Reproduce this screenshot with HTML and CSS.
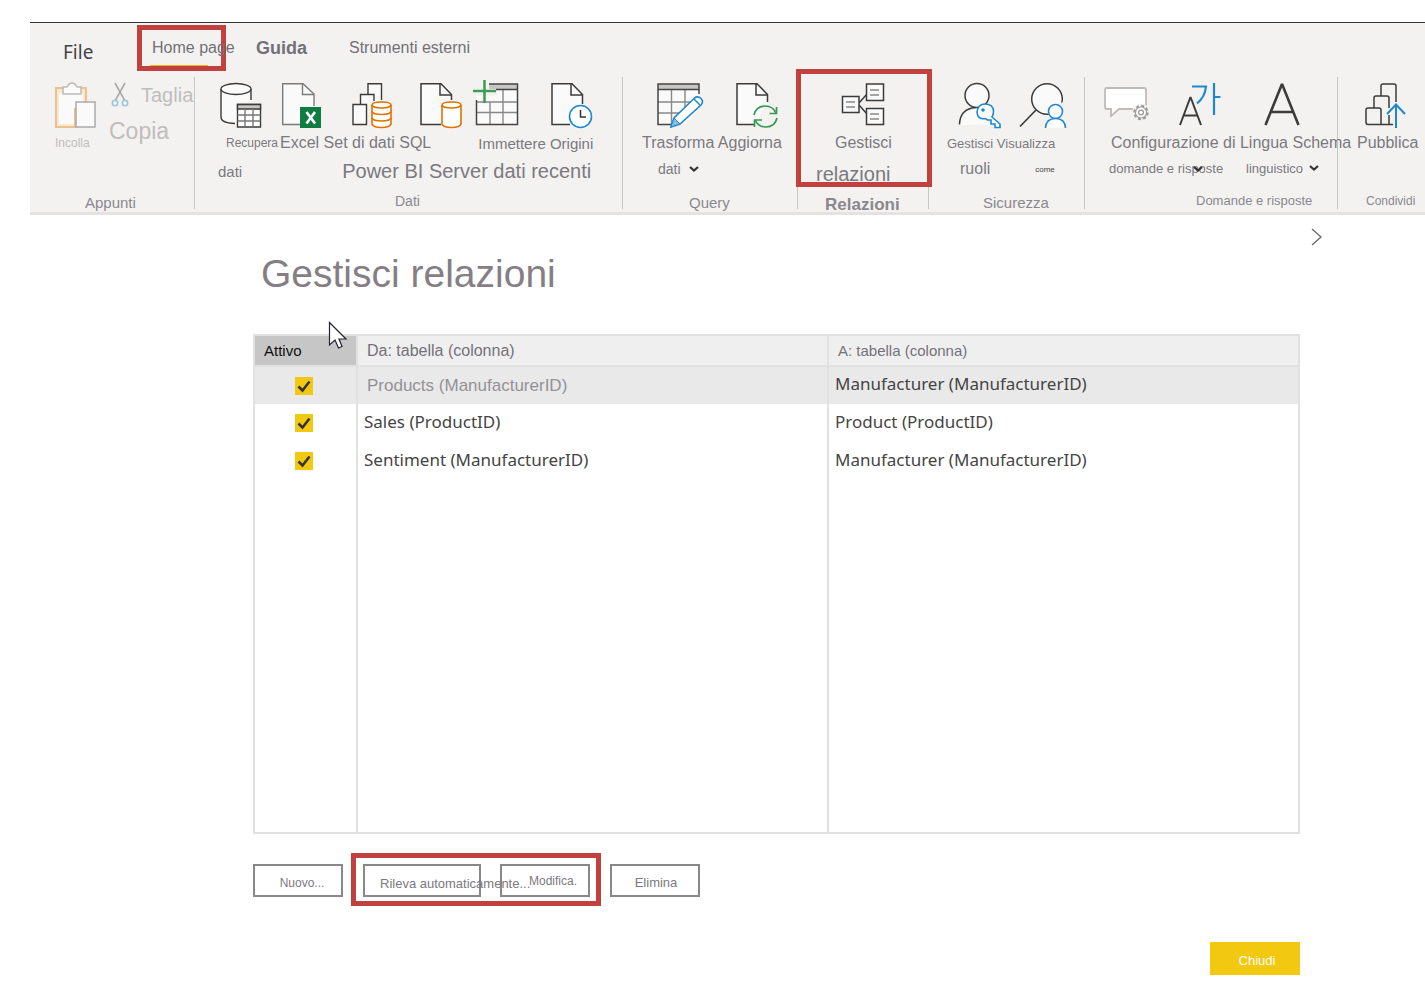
FILE: index.html
```html
<!DOCTYPE html>
<html lang="it">
<head>
<meta charset="utf-8">
<title>Gestisci relazioni</title>
<link rel="stylesheet" href="styles.css">
</head>
<body>
<header class="ribbon">
  <nav class="tabs">
    <a class="tab tab-file" href="#">File</a>
    <a class="tab tab-home" href="#">Home page</a>
    <a class="tab tab-guide" href="#">Guida</a>
    <a class="tab tab-tools" href="#">Strumenti esterni</a>
  </nav>
  <div class="groups">
    <section class="group clipboard">
      <div class="clip-cols">
        <button class="cmd paste" type="button">
          <svg width="44" height="48" fill="none"><path d="M9 6H2V45H21V27H32V6H26" fill="#f8e9cc" stroke="#efc08f" stroke-width="2"/><path d="M5 11H29V26H20V42H5Z" fill="#fafafa"/><path d="M9 5H13Q15 1 18 1T23 5H27V12H9Z" fill="#fafafa" stroke="#bbb" stroke-width="1.5"/><path d="M22 20H41V45H22Z" fill="#fafafa" stroke="#aaa" stroke-width="1.5"/></svg>
          <span class="t12">Incolla</span>
        </button>
        <div class="clip-side">
          <button class="cmd cut" type="button">
            <svg width="22" height="26" fill="none"><path d="M6 1L16 19M16 1L6 19" stroke="#aaa" stroke-width="1.6"/><circle cx="6" cy="21" r="2.7" stroke="#9cc6e2" stroke-width="1.6"/><circle cx="16" cy="21" r="2.7" stroke="#9cc6e2" stroke-width="1.6"/></svg>
            <span class="t20">Taglia</span>
          </button>
          <button class="cmd copy t23" type="button">Copia</button>
        </div>
      </div>
      <h2 class="caption t15">Appunti</h2>
    </section>

    <section class="group data">
      <div class="icons">
        <button class="cmd" type="button" aria-label="Recupera dati"><svg width="54" height="48" fill="none" stroke="#3b3b3b" stroke-width="1.4"><path d="M2 7V36Q2 41 16 42H18V20H32V7" fill="#fafafa" stroke="none"/><path d="M2 7V35Q2 41 16 41.500M32 7V18"/><ellipse cx="17" cy="7" rx="15" ry="5.500" fill="#fafafa"/><path d="M18.500 22.500H41.500V45H18.500Z" fill="#fff"/><path d="M18.500 22.500H41.500V27H18.500Z" fill="#c8c6c4"/><path d="M18.500 33H41.500M18.500 39H41.500M26 27V45M34 27V45" stroke="#777"/></svg></button>
        <button class="cmd" type="button" aria-label="Excel"><svg width="62" height="48" fill="none"><path d="M20 42.500H1.700V1.700H22L33 12V24" fill="#fafafa" stroke="#7a7a7a" stroke-width="1.4"/><path d="M21.500 2V12.500H33" stroke="#7a7a7a" stroke-width="1.4"/><path d="M19 25H40V46H19Z" fill="#107c41"/><path d="M25.500 30L34 41.500M34 30L25.500 41.500" stroke="#fff" stroke-width="2.600"/></svg></button>
        <button class="cmd" type="button" aria-label="Set di dati Power BI"><svg width="60" height="48" fill="none" stroke="#3b3b3b" stroke-width="1.400"><path d="M17 12V1.700H30.500V18L23 22V12Z" fill="#fafafa" stroke="none"/><path d="M17 12V1.700H30.500V18"/><path d="M9.500 22V12.500H23V20L16 24Z" fill="#fafafa" stroke="none"/><path d="M9.500 22V12.500H23V19"/><path d="M2 22.500H15.500V42.500H2Z" fill="#fafafa"/><path d="M21 23Q21 20 30.500 20T40 23V42Q39 45.500 30.500 45.500T21 42Z" fill="#fff" stroke="#e07000" stroke-width="1.600"/><path d="M21 23Q22 26 30.500 26T40 23M21 29.500Q22 32.500 30.500 32.500T40 29.500M21 36Q22 39 30.500 39T40 36" stroke="#e07000" stroke-width="1.600"/></svg></button>
        <button class="cmd" type="button" aria-label="SQL Server"><svg width="45" height="48" fill="none"><path d="M22 42.500H2V1.700H22L32.500 12.500V18" fill="#fafafa" stroke="#3b3b3b" stroke-width="1.500"/><path d="M21 2V13H32" stroke="#3b3b3b" stroke-width="1.500"/><path d="M23 23Q23 20 32.500 20T42 23V42Q41 45.500 32.500 45.500T23 42Z" fill="#fff" stroke="#e07000" stroke-width="1.600"/><path d="M23 23Q24 26 32.500 26T42 23" stroke="#e07000" stroke-width="1.600"/></svg></button>
        <button class="cmd" type="button" aria-label="Immettere dati"><svg width="70" height="48" fill="none"><path d="M4.500 14H25V2H45.500V42.500H4.500Z" fill="#fafafa"/><path d="M17 2H45.500V7H17Z" fill="#c8c6c4"/><path d="M5 30.500H45M5 20H45M18 20V42M31 8V42" stroke="#888" stroke-width="1.400"/><path d="M17 2H45.500V42.500H4.500V18M24 7.500H45" stroke="#444" stroke-width="1.500"/><path d="M12.500 -2V21M1 9H24" stroke="#3c9b55" stroke-width="2.500"/></svg></button>
        <button class="cmd" type="button" aria-label="Origini recenti"><svg width="44" height="48" fill="none"><path d="M20 42.500H2V1.700H22L32.500 12.500V22" fill="#fafafa" stroke="#3b3b3b" stroke-width="1.500"/><path d="M21 2V13H32" stroke="#3b3b3b" stroke-width="1.500"/><circle cx="30.500" cy="34.500" r="11" fill="#fff" stroke="#1e88cf" stroke-width="1.600"/><path d="M30.500 28V35H36" stroke="#333" stroke-width="1.500"/></svg></button>
      </div>
      <div class="line line1"><span class="t12">Recupera</span><span class="t16">Excel Set di dati SQL</span><span class="t15 enter">Immettere Origini</span></div>
      <div class="line line2"><span class="t15">dati</span><span class="t20">Power BI Server dati recenti</span></div>
      <h2 class="caption t14">Dati</h2>
    </section>

    <section class="group query">
      <div class="icons">
        <button class="cmd" type="button" aria-label="Trasforma dati"><svg width="71" height="48" fill="none"><path d="M2 2H43V42.500H2Z" fill="#fafafa"/><path d="M2 2H43V7.500H2Z" fill="#c8c6c4"/><path d="M2 20H42M2 31H30M15.500 8V42M29 8V30" stroke="#888" stroke-width="1.400"/><path d="M43 12V2H2V42.500H20M2 7.500H43" stroke="#444" stroke-width="1.500"/><path d="M25 46L47 24V40L40 46Z" fill="#f3f2f1"/><path d="M15 45L18 36L38.500 16Q42 13.500 45 16.500T45 23L24 42Z" fill="#fff" stroke="#1e88cf" stroke-width="1.600"/><path d="M15 45L18 36L24 42Z" fill="#83bde8" stroke="#1e88cf"/><path d="M38 17L44 23" stroke="#1e88cf" stroke-width="1.500"/></svg></button>
        <button class="cmd" type="button" aria-label="Aggiorna"><svg width="46" height="48" fill="none"><path d="M20 42.500H2V1.700H22L32.500 12.500V20" fill="#fafafa" stroke="#3b3b3b" stroke-width="1.500"/><path d="M21 2V13H32" stroke="#3b3b3b" stroke-width="1.500"/><path d="M19 33Q21 24 30 24Q38 24 41 31M42 36Q40 45 31 45Q23 45 20 38" stroke="#379650" stroke-width="1.700"/><path d="M41.500 25V31.500H34.500M19.500 45V38H27" stroke="#379650" stroke-width="1.700"/></svg></button>
      </div>
      <div class="line t16">Trasforma Aggiorna</div>
      <div class="line t14 line2">dati <svg class="chev" width="10" height="6" fill="none" stroke="#333" stroke-width="2.200"><path d="M1 1L5 4.500L9 1"/></svg></div>
      <h2 class="caption t15">Query</h2>
    </section>

    <section class="group relations">
      <div class="icons">
        <button class="cmd" type="button" aria-label="Gestisci relazioni"><svg width="44" height="48" fill="none" stroke="#3b3b3b" stroke-width="1.500"><path d="M18 21L26 12M18 23L26 32"/><path d="M1.500 14.500H18V30.500H1.500ZM25.500 2H42.500V18.500H25.500ZM25.500 26.500H42.500V42.500H25.500Z" fill="#fafafa"/><path d="M5 20H14M5 25H14M29 8H38M29 13H38M29 32H38M29 37H38" stroke="#888"/></svg></button>
      </div>
      <div class="line t16">Gestisci</div>
      <div class="line line2 t20">relazioni</div>
      <h2 class="caption">Relazioni</h2>
    </section>

    <section class="group security">
      <div class="icons">
        <button class="cmd" type="button" aria-label="Gestisci ruoli"><svg width="61" height="48" fill="none"><path d="M1 43Q1 26 18 26L32 43Z" fill="#fafafa"/><path d="M.500 42.500Q1 26.500 17 25.500" stroke="#3b3b3b" stroke-width="1.500"/><circle cx="18" cy="13.500" r="12" fill="#fafafa" stroke="#3b3b3b" stroke-width="1.500"/><path d="M33 35L41 42V45.500H36V42H32V38H28.500L26.500 36.500Q18.500 38 18 30Q19 22 26 22Q34 22 34.500 29Q34.500 33 33 35Z" fill="#fff" stroke="#1e88cf" stroke-width="1.600"/><circle cx="24" cy="28" r="1.800" fill="#1e88cf"/></svg></button>
        <button class="cmd" type="button" aria-label="Visualizza come"><svg width="48" height="48" fill="none"><circle cx="27" cy="17" r="15.300" fill="#fafafa" stroke="#3b3b3b" stroke-width="1.500"/><path d="M16 28L0 44.500" stroke="#3b3b3b" stroke-width="1.700"/><path d="M25 46V40Q26 35 30 35Q27 30 28 24L44 20V46Z" fill="#f3f2f1"/><circle cx="35.500" cy="29.500" r="7" fill="#fff" stroke="#1e88cf" stroke-width="1.600"/><path d="M25.500 46Q26 36.500 35.500 36.500T45.500 46" fill="#fff" stroke="#1e88cf" stroke-width="1.600"/></svg></button>
      </div>
      <div class="line t13">Gestisci Visualizza</div>
      <div class="line line2"><span class="t16">ruoli</span><span class="t8">come</span></div>
      <h2 class="caption t15">Sicurezza</h2>
    </section>

    <section class="group qna">
      <div class="icons">
        <button class="cmd" type="button" aria-label="Configurazione di domande e risposte"><svg width="76" height="48" fill="none"><path d="M3 6H40Q42 6 42 8V27H15L7 34V27H3Q1 27 1 25V8Q1 6 3 6Z" fill="#fff" stroke="#bebbb8" stroke-width="1.800"/><circle cx="37" cy="30.500" r="9" fill="#f3f2f1"/><circle cx="37" cy="30.500" r="6.700" stroke="#999" stroke-width="2" stroke-dasharray="3 2.260"/><circle cx="37" cy="30.500" r="5.500" fill="#fff" stroke="#999" stroke-width="1.200"/><circle cx="37" cy="30.500" r="2.400" stroke="#999" stroke-width="1.300"/></svg></button>
        <button class="cmd" type="button" aria-label="Lingua"><svg width="84" height="48" fill="none"><path d="M0 43L10.500 15L21 43M4 33.500H17" stroke="#3b3b3b" stroke-width="2" stroke-linejoin="bevel"/><path d="M12 4.500H26Q25 15 17 21.500M34 1V33M34 15H40.500" stroke="#1e88cf" stroke-width="2.200"/></svg></button>
        <button class="cmd" type="button" aria-label="Schema linguistico"><svg width="38" height="48" fill="none" stroke="#3b3b3b"><path d="M1.500 43L18 2L34.500 43M7 30H29" stroke-width="2.600" stroke-linejoin="bevel"/></svg></button>
      </div>
      <div class="line t16">Configurazione di Lingua Schema</div>
      <div class="line line2 t13"><span class="qna-setup">domande e risposte<svg class="chev over" width="10" height="6" fill="none" stroke="#333" stroke-width="2.200"><path d="M1 1L5 4.500L9 1"/></svg></span><span>linguistico</span><svg class="chev" width="10" height="6" fill="none" stroke="#333" stroke-width="2.200"><path d="M1 1L5 4.500L9 1"/></svg></div>
      <h2 class="caption t13">Domande e risposte</h2>
    </section>

    <section class="group share">
      <div class="icons">
        <button class="cmd" type="button" aria-label="Pubblica"><svg width="44" height="48" fill="none" stroke="#3b3b3b" stroke-width="1.500"><path d="M17 14V4Q17 2 19 2H30Q32 2 32 4V20"/><path d="M10 26V16Q10 14 12 14H23Q25 14 25 16V26M25 33V42"/><path d="M17 42.500H4Q2 42.500 2 40V28Q2 26 4 26H15Q17 26 17 28V42.500H29"/><path d="M32 46V23M23 32L32 22.500L41 32" stroke="#1e88cf" stroke-width="2"/></svg></button>
      </div>
      <div class="line t16">Pubblica</div>
      <h2 class="caption t12">Condividi</h2>
    </section>
  </div>
</header>

<main class="dialog">
  <div class="expand-row">
    <button class="expand" type="button" aria-label="Espandi"><svg width="12" height="18" fill="none" stroke="#666" stroke-width="1.300"><path d="M1 1L10 9L1 17"/></svg></button>
  </div>
  <h1 class="title">Gestisci relazioni</h1>
  <div class="grid-wrap">
    <table class="rel">
      <thead>
        <tr><th class="c-active">Attivo</th><th>Da: tabella (colonna)</th><th class="t15">A: tabella (colonna)</th></tr>
      </thead>
      <tbody>
        <tr class="selected"><td class="chk"><input type="checkbox" aria-label="Products (ManufacturerID)" checked></td><td class="dim">Products (ManufacturerID)</td><td>Manufacturer (ManufacturerID)</td></tr>
        <tr><td class="chk"><input type="checkbox" aria-label="Sales (ProductID)" checked></td><td>Sales (ProductID)</td><td>Product (ProductID)</td></tr>
        <tr><td class="chk"><input type="checkbox" aria-label="Sentiment (ManufacturerID)" checked></td><td>Sentiment (ManufacturerID)</td><td>Manufacturer (ManufacturerID)</td></tr>
        <tr class="rest"><td></td><td></td><td></td></tr>
      </tbody>
    </table>
    <svg class="cursor" width="20" height="29"><path d="M1.500 1.500V24L7 19L10.500 27L14 25.500L11 18H18Z" fill="#fff" stroke="#223" stroke-width="1.200"/></svg>
  </div>
  <div class="actions">
    <button class="btn t12" type="button">Nuovo...</button>
    <div class="marked">
      <button class="btn btn-detect t13" type="button">Rileva automaticamente...</button>
      <button class="btn btn-edit t12" type="button">Modifica.</button>
    </div>
    <button class="btn btn-delete t13" type="button">Elimina</button>
  </div>
  <div class="footer"><button class="btn-close t13" type="button">Chiudi</button></div>
</main>
</body>
</html>
```
FILE: styles.css
```css
*, *::before, *::after { box-sizing: border-box; }
body {
  margin: 0;
  padding-top: 22px;
  background: #fff;
  color: #7b797e;
  font-family: "Liberation Sans", Arial, sans-serif;
  overflow-x: hidden;
}
h1, h2 { margin: 0; font-weight: 400; }
button { font-family: inherit; color: inherit; cursor: pointer; }

.t8 { font-size: 8px; color: #444; }
.t12 { font-size: 12px; }
.t13 { font-size: 13px; }
.t14 { font-size: 14px; }
.t15 { font-size: 15px; }
.t16 { font-size: 16px; }
.t20 { font-size: 20px; }
.t23 { font-size: 23px; }

/* Ribbon */
.ribbon {
  margin-left: 30px;
  background: #f3f2f1;
  border-top: 1px solid #333;
  border-bottom: 3px solid #e4e3e2;
}
.tabs {
  display: flex;
  align-items: center;
  height: 54px;
  padding: 0 0 4px 33px;
}
.tab {
  color: #727075;
  font-size: 16px;
  text-decoration: none;
  white-space: nowrap;
}
.tab-file {
  width: 89px;
  padding-top: 8px;
  color: #444;
  font-family: "Noto Sans", sans-serif;
  font-size: 19px;
}
.tab-home {
  position: relative;
  z-index: 1;
  width: 104px;
}
.tab-home::before {
  content: "";
  position: absolute;
  z-index: -1;
  left: -15px;
  top: -14px;
  width: 89px;
  height: 46px;
  border: 5px solid #c1413e;
}
.tab-home::after {
  content: "";
  position: absolute;
  z-index: -1;
  left: -2px;
  top: 26px;
  width: 58px;
  height: 1px;
  background: #f2b811;
}
.tab-guide { width: 93px; font-size: 18px; font-weight: 700; }

.groups {
  display: grid;
  grid-template-columns: 165fr 428fr 175fr 131fr 156fr 253fr 87fr;
  padding-bottom: 3px;
}
.group {
  position: relative;
  display: flex;
  flex-direction: column;
  min-width: 0;
  height: 132px;
  border-right: 1px solid #c8c6c4;
}
.group:last-child { border-right: 0; }
.icons { display: flex; height: 53px; padding-top: 5px; }
.cmd { padding: 0; border: 0; background: none; }
.cmd svg { display: block; overflow: visible; }
.line {
  display: flex;
  align-items: center;
  height: 26px;
  white-space: nowrap;
}
.caption {
  margin-top: auto;
  height: 16px;
  line-height: 16px;
  color: #8a888e;
  white-space: nowrap;
}
.caption.t15 { line-height: 20px; }
.chev { flex: none; }

.clip-cols { display: flex; padding-left: 24px; color: #bfbdbc; }
.paste { width: 55px; padding-top: 5px; text-align: left; }
.paste span { display: block; padding: 6px 0 0 1px; }
.clip-side { display: flex; flex-direction: column; }
.cut { display: flex; align-items: center; gap: 10px; height: 36px; }
.copy { height: 36px; text-align: left; }
.clipboard .caption { padding-left: 55px; }

.data .icons { gap: 8px; padding-left: 24px; }
.data .line1 { gap: 2px; padding-left: 31px; }
.data .enter { padding-left: 45px; }
.data .line2 { height: 30px; gap: 100px; padding-left: 23px; }
.data .caption { padding-left: 200px; }

.query .icons { gap: 8px; padding-left: 33px; }
.query .line { padding-left: 19px; }
.query .line2 { gap: 8px; padding-left: 35px; }
.query .caption { padding-left: 66px; }

.relations .icons { padding-left: 43px; }
.relations .line { padding-left: 37px; }
.relations .line2 { height: 36px; padding-left: 18px; }
.relations .caption {
  padding-left: 27px;
  line-height: 24px;
  font-size: 17px;
  font-weight: 700;
}
.relations::before {
  content: "";
  position: absolute;
  z-index: 1;
  inset: -8px -4px 22px -2px;
  border: 5px solid #c1413e;
  pointer-events: none;
}

.security .icons { padding-left: 30px; }
.security .line { padding-left: 18px; }
.security .line2 { gap: 45px; padding-left: 31px; }
.security .caption { padding-left: 54px; }

.qna .icons { padding-left: 19px; }
.qna .line { padding-left: 26px; }
.qna .line2 { gap: 6px; height: 24px; padding-left: 24px; }
.qna-setup { position: relative; width: 131px; }
.over { position: absolute; left: 84px; top: 5px; }
.qna .caption { padding-left: 111px; }

.share .icons { padding-left: 26px; }
.share .line { padding-left: 19px; }
.share .caption { padding-left: 28px; }

/* Dialog */
.dialog { padding: 0 125px 15px 253px; }
.expand-row { display: flex; justify-content: flex-end; height: 34px; margin-right: -23px; padding-top: 13px; }
.expand { height: 18px; padding: 0; border: 0; background: none; }
.expand svg { display: block; }
.title {
  padding-left: 8px;
  font-size: 39px;
  line-height: 50px;
  color: #857e85;
}
.grid-wrap { position: relative; margin-top: 35px; }
.rel {
  width: 100%;
  height: 500px;
  table-layout: fixed;
  border-collapse: collapse;
  color: #444;
  font-family: "Noto Sans", sans-serif;
  font-size: 17px;
}
.rel th, .rel td {
  height: 38px;
  padding: 0 0 4px 6px;
  border: solid #e1e1e1;
  border-width: 0 2px;
  text-align: left;
  white-space: nowrap;
}
.rel th {
  height: 31px;
  padding: 0 0 0 9px;
  border-width: 2px;
  background: #efefef;
  color: #747278;
  font-family: "Liberation Sans", Arial, sans-serif;
  font-size: 16px;
  font-weight: 400;
}
.rel .c-active { width: 103px; background: #c6c6c6; color: #111; font-size: 15px; }
.rel th.t15 { font-size: 15px; }
.rel .dim { padding: 0 0 0 9px; color: #939196; font-family: "Liberation Sans", Arial, sans-serif; }
.rel .chk { padding: 0 4px 0 0; text-align: center; }
.rel .selected td { background: #e9e9e9; }
.rel .rest td { height: auto; border-bottom-width: 2px; }
.chk input {
  display: block;
  width: 18px;
  height: 18px;
  margin: 0 auto;
  appearance: none;
  background: #f2c811 url("data:image/svg+xml,%3Csvg xmlns='http://www.w3.org/2000/svg' width='18' height='18' fill='none' stroke='%23333' stroke-width='2.500'%3E%3Cpath d='M3.500 9.500L7.500 13.500L14.500 4.500'/%3E%3C/svg%3E");
}
.cursor { position: absolute; left: 75px; top: -13px; }

.actions { display: flex; gap: 20px; padding-top: 30px; }
.btn {
  width: 90px;
  height: 33px;
  padding: 5px 0 0 8px;
  border: 2px solid #888;
  background: none;
  white-space: nowrap;
}
.marked { position: relative; display: flex; gap: 19px; }
.marked::after {
  content: "";
  position: absolute;
  inset: -11px -11px -9px -12px;
  border: 5px solid #c1413e;
  pointer-events: none;
}
.btn-detect { width: 118px; padding-left: 15px; text-align: left; }
.btn-edit { padding: 0 11px 0 0; text-align: right; }
.btn-delete { padding: 4px 0 0 2px; }
.footer { display: flex; justify-content: flex-end; padding-top: 45px; }
.btn-close {
  width: 90px;
  height: 33px;
  padding: 4px 0 0 4px;
  border: 0;
  background: #f2c811;
  color: #fff;
}
```
